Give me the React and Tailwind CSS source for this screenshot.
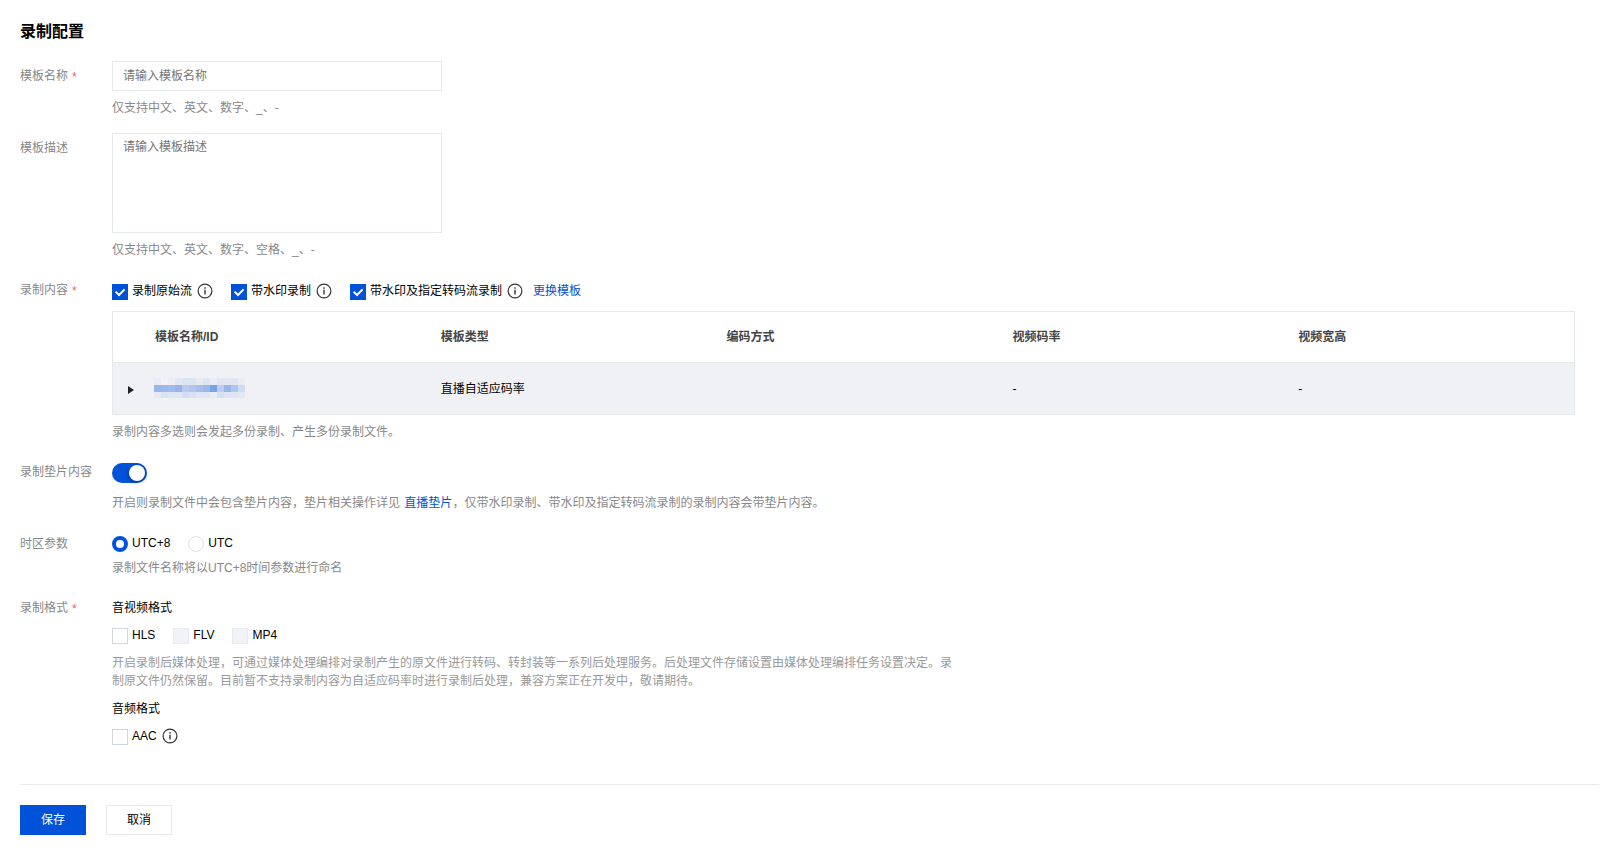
import { useState } from "react";
import clsx from "clsx";

const columns = ["模板名称/ID", "模板类型", "编码方式", "视频码率", "视频宽高"];

// masked template id, one entry per tile
const mosaic = [
  ["#e9ecf5", "#f2f3f6", "#ebeef6", "#e3e8f4", "#dbe4f3", "#dbe4f3", "#e6ebf3", "#dbe6f3", "#e9ecf5", "#dde5f3", "#e0e6f3", "#e0e5f3", "#ebedf4"],
  ["#9cb6e9", "#9cb8e9", "#9fbbea", "#9ab4e8", "#b9ccee", "#b4c4ec", "#a6bdea", "#9bb7e9", "#78a3e8", "#bccdef", "#98b5e8", "#aec8ed", "#cfdcf1"],
  ["#e5e9f4", "#d9e1f2", "#dee5f3", "#dfe5f3", "#d3dcf1", "#d9e2f3", "#dfe5f4", "#dde6f3", "#e8edf5", "#d7dff3", "#dfe4f3", "#dfe5f3", "#e2e7f4"],
];

const InfoIcon = ({ className }) => (
  <svg viewBox="0 0 16 16" className={clsx("-mt-px h-4 w-4 shrink-0", className)} fill="none">
    <circle cx="8" cy="8" r="6.9" stroke="#333" strokeWidth="1.2" />
    <path d="M8 6.8v4.8M8 4.2v1.5" stroke="#333" strokeWidth="1.4" />
  </svg>
);

const Checkbox = ({ label, checked, disabled, onChange }) => (
  <label className="flex h-4 items-center">
    <input type="checkbox" className="sr-only" checked={checked} disabled={disabled} onChange={onChange} />
    <span
      className={clsx(
        "flex h-4 w-4 shrink-0 items-center justify-center border",
        checked && "border-[#0052d9] bg-[#0052d9]",
        !checked && disabled && "border-[#e7eaef] bg-[#f2f3f8]",
        !checked && !disabled && "border-[#cfd5de] bg-white"
      )}
    >
      {checked && (
        <svg viewBox="0 0 16 16" className="h-4 w-4 shrink-0" fill="none">
          <path d="M3.6 7.6L7 11L12.6 5.4" stroke="#fff" strokeWidth="2" />
        </svg>
      )}
    </span>
    <span className="-mt-0.5 ml-1 leading-4">{label}</span>
  </label>
);

const Radio = ({ label, checked, onChange }) => (
  <label className="flex h-4 items-center">
    <input type="radio" name="timezone" className="sr-only" checked={checked} onChange={onChange} />
    <span
      className={clsx(
        "h-4 w-4 shrink-0 rounded-full bg-white",
        checked ? "border-4 border-[#0052d9]" : "border border-[#dcdfe6]"
      )}
    />
    <span className="-mt-0.5 ml-1 leading-4">{label}</span>
  </label>
);

const FormRow = ({ label, required, className, children }) => (
  <div className={clsx("flex", className)}>
    <div className="flex w-[92px] shrink-0 leading-[30px] whitespace-nowrap text-[#888]">
      {label}
      {required && <span className="ml-1 pt-px text-[#f06060]">*</span>}
    </div>
    <div className="min-w-0 flex-1">{children}</div>
  </div>
);

const Help = ({ className, children }) => (
  <p className={clsx("leading-[18px] text-[#888]", className)}>{children}</p>
);

const App = () => {
  const [content, setContent] = useState({ origin: true, watermark: true, transcode: true });
  const [padding, setPadding] = useState(true);
  const [timezone, setTimezone] = useState("UTC+8");
  const [formats, setFormats] = useState({ hls: false, aac: false });

  const toggleContent = (key) => setContent({ ...content, [key]: !content[key] });
  const toggleFormat = (key) => setFormats({ ...formats, [key]: !formats[key] });

  return (
    <div className="h-[866px] bg-white px-5 pt-[21px] pr-6 font-['Liberation_Sans','Noto_Sans_CJK_SC',sans-serif] text-xs text-black">
      <h1 className="text-base leading-[22px] font-bold">录制配置</h1>

      <FormRow label="模板名称" required className="mt-[18px]">
        <input
          placeholder="请输入模板名称"
          className="block h-[30px] w-[330px] border border-[#e5e8ef] px-2.5 outline-none placeholder:text-[#757575]"
        />
        <Help className="mt-2">仅支持中文、英文、数字、_、-</Help>
      </FormRow>

      <FormRow label="模板描述" className="mt-4">
        <textarea
          placeholder="请输入模板描述"
          className="block h-[100px] w-[330px] resize-none border border-[#e5e8ef] px-2.5 py-1 leading-[18px] outline-none placeholder:text-[#757575]"
        />
        <Help className="mt-2">仅支持中文、英文、数字、空格、_、-</Help>
      </FormRow>

      <FormRow label="录制内容" required className="mt-4">
        <div className="flex h-9 items-start pt-[9px]">
          <Checkbox label="录制原始流" checked={content.origin} onChange={() => toggleContent("origin")} />
          <InfoIcon className="mr-[18px] ml-[5px]" />
          <Checkbox label="带水印录制" checked={content.watermark} onChange={() => toggleContent("watermark")} />
          <InfoIcon className="mr-[18px] ml-[5px]" />
          <Checkbox label="带水印及指定转码流录制" checked={content.transcode} onChange={() => toggleContent("transcode")} />
          <InfoIcon className="mr-2.5 ml-[5px]" />
          <a href="#" className="-mt-px leading-4 text-[#0052d9]">更换模板</a>
        </div>

        {/* Template table */}
        <div className="w-[1463px] border border-[#e5e8ef]">
          <div className="flex h-[51px] items-center border-b border-[#e5e8ef] pl-8 font-bold text-[#444]">
            {columns.map((name) => (
              <div key={name} className="flex-1 pl-2.5">{name}</div>
            ))}
          </div>
          <div className="flex h-[51px] items-center bg-[#f0f1f5]">
            <div className="w-8 pl-[15px]">
              <svg viewBox="0 0 6 8" className="mt-0.5 h-2 w-1.5">
                <path d="M0 0L6 4L0 8Z" fill="#222" />
              </svg>
            </div>
            <div className="flex-1 pb-px pl-2.5">
              {mosaic.map((tiles, i) => (
                <div key={i} className={clsx("-ml-px flex", i === 2 ? "h-1.5" : "h-[7px]")}>
                  {tiles.map((color, j) => (
                    <span key={j} className="w-[7px]" style={{ backgroundColor: color }} />
                  ))}
                </div>
              ))}
            </div>
            <div className="flex-1 pl-2.5">直播自适应码率</div>
            <div className="flex-1 pl-2.5" />
            <div className="flex-1 pl-2.5">-</div>
            <div className="flex-1 pl-2.5">-</div>
          </div>
        </div>
        <Help className="mt-2">录制内容多选则会发起多份录制、产生多份录制文件。</Help>
      </FormRow>

      <FormRow label="录制垫片内容" className="mt-4">
        <button
          onClick={() => setPadding(!padding)}
          className={clsx(
            "mt-1.5 flex h-5 w-[35px] items-center rounded-full px-0.5",
            padding ? "justify-end bg-[#0052d9]" : "justify-start bg-[#bbb]"
          )}
        >
          <span className="h-4 w-4 rounded-full bg-white shadow-[0_1px_4px_rgba(0,0,0,0.4)]" />
        </button>
        <Help className="mt-[11px]">
          开启则录制文件中会包含垫片内容，垫片相关操作详见{" "}
          <a href="#" className="ml-px text-[#0052d9]">直播垫片</a>
          ，仅带水印录制、带水印及指定转码流录制的录制内容会带垫片内容。
        </Help>
      </FormRow>

      <FormRow label="时区参数" className="mt-[17px]">
        <div className="flex gap-[18px] pt-[7px]">
          <Radio label="UTC+8" checked={timezone === "UTC+8"} onChange={() => setTimezone("UTC+8")} />
          <Radio label="UTC" checked={timezone === "UTC"} onChange={() => setTimezone("UTC")} />
        </div>
        <Help className="mt-[7px]">录制文件名称将以UTC+8时间参数进行命名</Help>
      </FormRow>

      <FormRow label="录制格式" required className="mt-4">
        <h4 className="leading-[30px]">音视频格式</h4>
        <div className="mt-[5px] flex gap-[18px]">
          <Checkbox label="HLS" checked={formats.hls} onChange={() => toggleFormat("hls")} />
          <Checkbox label="FLV" checked={false} disabled />
          <Checkbox label="MP4" checked={false} disabled />
        </div>
        <p className="mt-2.5 w-[850px] leading-[18px] text-[#999]">
          开启录制后媒体处理，可通过媒体处理编排对录制产生的原文件进行转码、转封装等一系列后处理服务。后处理文件存储设置由媒体处理编排任务设置决定。录制原文件仍然保留。目前暂不支持录制内容为自适应码率时进行录制后处理，兼容方案正在开发中，敬请期待。
        </p>
        <h4 className="mt-2.5 leading-[18px]">音频格式</h4>
        <div className="mt-[11px] flex h-4">
          <Checkbox label="AAC" checked={formats.aac} onChange={() => toggleFormat("aac")} />
          <InfoIcon className="ml-[5px]" />
        </div>
      </FormRow>

      {/* Footer actions */}
      <div className="mt-[39px] flex gap-5 border-t border-[#e9ebf1] pt-5">
        <button className="h-[30px] w-[66px] bg-[#0052d9] text-white">保存</button>
        <button className="h-[30px] w-[66px] border border-[#e5e8ef] bg-white">取消</button>
      </div>
    </div>
  );
};

export default App;
